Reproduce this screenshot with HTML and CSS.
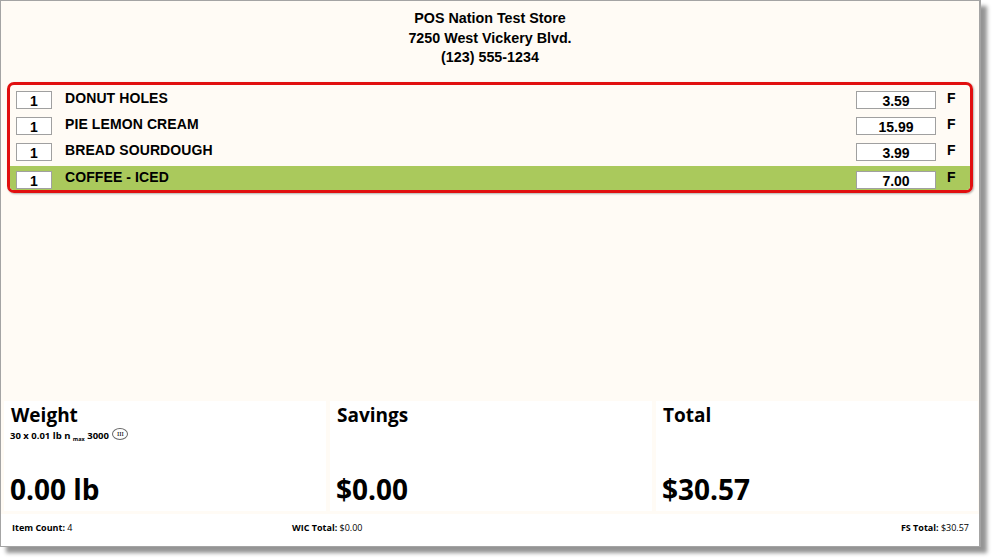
FILE: index.html
```html
<!DOCTYPE html>
<html>
<head>
<meta charset="utf-8">
<link rel="stylesheet" href="styles.css">
</head>
<body>
<div class="window">
  <div class="header">
    <div>POS Nation Test Store</div>
    <div>7250 West Vickery Blvd.</div>
    <div>(123) 555-1234</div>
  </div>
  <div class="items">
    <div class="row">
      <div class="qty">1</div>
      <div class="name">DONUT HOLES</div>
      <div class="price">3.59</div>
      <div class="tax">F</div>
    </div>
    <div class="row">
      <div class="qty">1</div>
      <div class="name">PIE LEMON CREAM</div>
      <div class="price">15.99</div>
      <div class="tax">F</div>
    </div>
    <div class="row">
      <div class="qty">1</div>
      <div class="name">BREAD SOURDOUGH</div>
      <div class="price">3.99</div>
      <div class="tax">F</div>
    </div>
    <div class="row selected">
      <div class="qty">1</div>
      <div class="name">COFFEE - ICED</div>
      <div class="price">7.00</div>
      <div class="tax">F</div>
    </div>
  </div>
  <div class="panels">
    <div class="panel">
      <div class="title">Weight</div>
      <div class="scale">30 x 0.01 lb n <span class="sub">max</span> 3000 <span class="cls">III</span></div>
      <div class="value">0.00 lb</div>
    </div>
    <div class="panel">
      <div class="title">Savings</div>
      <div class="value">$0.00</div>
    </div>
    <div class="panel">
      <div class="title">Total</div>
      <div class="value">$30.57</div>
    </div>
  </div>
  <div class="footer">
    <div class="f-count"><b>Item Count:</b> 4</div>
    <div class="f-wic"><b>WIC Total:</b> $0.00</div>
    <div class="f-fs"><b>FS Total:</b> $30.57</div>
  </div>
</div>
</body>
</html>
```
FILE: styles.css
```css
html, body {
  margin: 0;
  padding: 0;
  background: #ffffff;
}
body {
  width: 996px;
  height: 560px;
  overflow: hidden;
}
.window {
  box-sizing: border-box;
  width: 981px;
  height: 547px;
  border: 1px solid #a4a4a4;
  border-right: 2px solid #a4a4a4;
  background: #fffbf5;
  box-shadow: 6px 6px 4px rgba(0, 0, 0, 0.42);
  display: flex;
  flex-direction: column;
  color: #000;
}
.header {
  padding-top: 8px;
  text-align: center;
  font-family: "Liberation Sans", Arial, sans-serif;
  font-weight: bold;
  font-size: 14.3px;
  line-height: 19.5px;
}
.items {
  margin: 14px 6px 0 6px;
  padding-top: 1px;
  border: 3px solid #e10f0f;
  border-radius: 7px;
  box-shadow: 1px 1px 2px rgba(0, 0, 0, 0.3);
  font-family: "Liberation Sans", Arial, sans-serif;
  font-weight: bold;
  font-size: 14px;
  overflow: hidden;
}
.row {
  display: flex;
  align-items: flex-start;
  height: 26px;
}
.row.selected {
  height: 24px;
  margin-top: 2px;
  background: #aac95c;
}
.qty, .price {
  box-sizing: border-box;
  height: 18px;
  margin-top: 5px;
  border: 1px solid #a0a0a0;
  background: #fff;
  text-align: center;
  line-height: 18px;
}
.qty {
  width: 36px;
  margin-left: 6px;
}
.price {
  width: 80px;
}
.name {
  flex: 1;
  margin-left: 13px;
  padding-top: 4px;
  line-height: 16px;
  letter-spacing: 0.1px;
}
.tax {
  width: 23px;
  margin-left: 11px;
  padding-top: 4px;
  line-height: 16px;
}
.row.selected .name, .row.selected .tax {
  padding-top: 3px;
}
.panels {
  margin-top: auto;
  display: flex;
  gap: 4px;
  padding: 0 1px 0 3px;
  height: 110px;
  font-family: "Open Sans", "Noto Sans", sans-serif;
}
.panel {
  flex: 1;
  background: #ffffff;
  display: flex;
  flex-direction: column;
  padding: 2px 6px 6px 6px;
  box-sizing: border-box;
}
.panel .title {
  padding-left: 1px;
}
.title {
  font-weight: bold;
  font-size: 19px;
  line-height: 24px;
}
.scale {
  font-weight: bold;
  font-size: 9.5px;
  line-height: 12px;
  margin-top: 3px;
  display: flex;
  align-items: center;
  white-space: pre;
}
.sub {
  font-size: 5.5px;
  position: relative;
  top: 3px;
}
.cls {
  font-family: "Liberation Serif", serif;
  font-weight: normal;
  font-size: 7px;
  line-height: 10px;
  border: 1px solid #666;
  border-radius: 50%;
  padding: 0 3.5px;
  margin-left: 1px;
  position: relative;
  top: -2px;
}
.value {
  margin-top: auto;
  font-weight: bold;
  font-size: 28px;
  line-height: 32px;
}
.footer {
  margin-top: 3px;
  height: 32px;
  background: #ffffff;
  display: flex;
  align-items: flex-start;
  padding: 8px 10px 0 11px;
  box-sizing: border-box;
  font-family: "Open Sans", "Noto Sans", sans-serif;
  font-size: 9px;
  line-height: 12px;
}
.footer b {
  font-weight: bold;
}
.f-count {
  width: 280px;
}
.f-wic {
  flex: 1;
}
.f-fs {
  text-align: right;
}
```
